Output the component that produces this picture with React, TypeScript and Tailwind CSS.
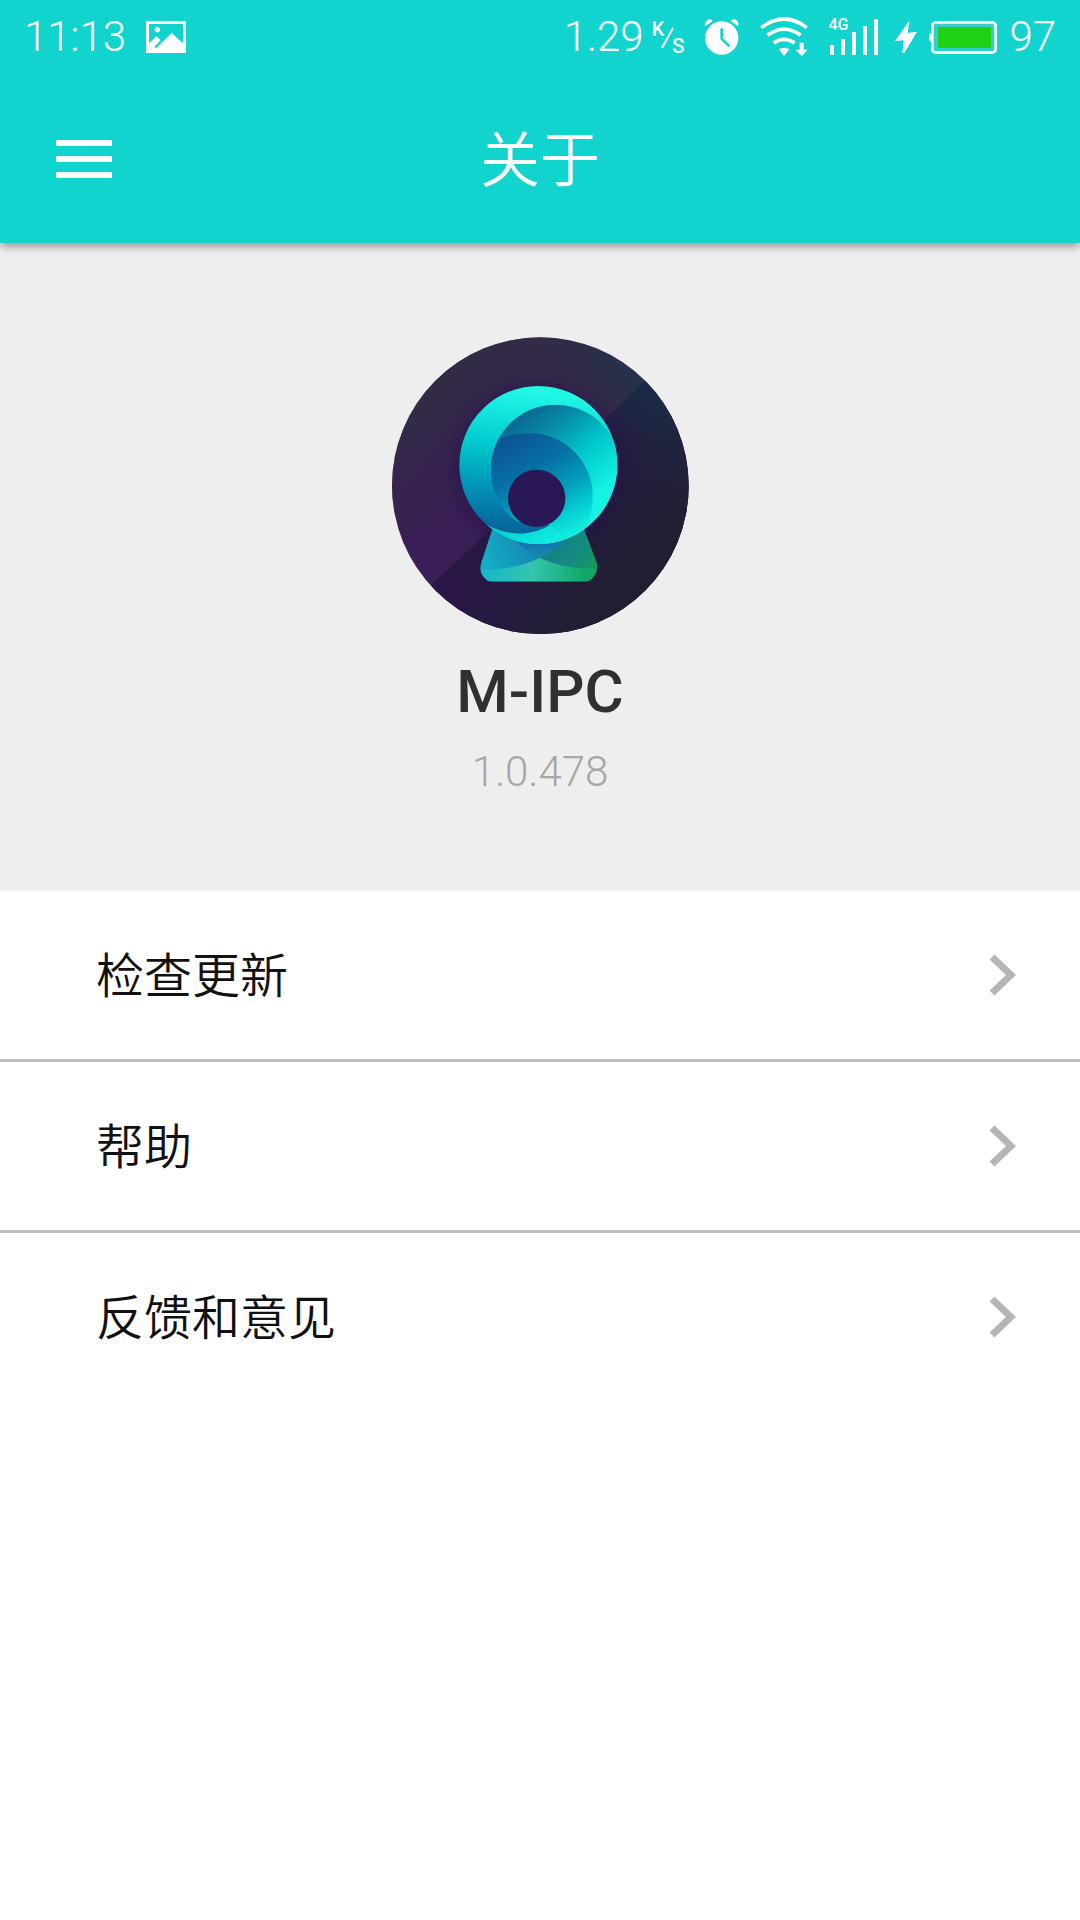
import React from "react";

const menuItems = ["检查更新", "帮助", "反馈和意见"];

function PictureIcon() {
  return (
    <svg className="h-8 w-10 shrink-0" viewBox="0 0 120 96" aria-hidden="true">
      <path d="M4.500 4.500H115.500V91.500H4.500Z" fill="none" stroke="#fff" strokeWidth="9" />
      <circle cx="34" cy="26" r="8" fill="#fff" />
      <path d="M6 69 31 46 44 57 25 78 30 82 77 36 114 70V92H6Z" fill="#fff" />
    </svg>
  );
}

function AlarmIcon() {
  return (
    <svg className="h-9 w-9 shrink-0" viewBox="0 0 108 108" aria-hidden="true">
      <circle cx="53" cy="57" r="50" fill="#fff" />
      <path d="M4 22Q0 12 8 4Q18-3 26 6ZM102 22Q106 12 98 4Q88-3 80 6Z" fill="#fff" />
      <path d="M53 31V59L74 80" fill="none" stroke="#12d4ce" strokeWidth="8" strokeLinecap="round" strokeLinejoin="round" />
    </svg>
  );
}

function WifiIcon() {
  return (
    <svg className="h-10 w-12 shrink-0" viewBox="0 0 144 120" aria-hidden="true">
      <g fill="none" stroke="#fff" strokeWidth="11">
        <path d="M4 32Q72-20 140 32" />
        <path d="M22 55Q72 18 122 55" />
        <path d="M41 78Q72 56 104 78" />
      </g>
      <path d="M56 97Q72 88 88 97L72 117Z" fill="#fff" />
      <path d="M119 77H131V98H143L125 118 107 98H119Z" fill="#fff" />
    </svg>
  );
}

function SignalIcon() {
  return (
    <div className="relative h-9 w-[51px] shrink-0">
      <span className="absolute left-0 top-0 text-base leading-3 font-medium">4G</span>
      <svg className="h-9 w-[51px]" viewBox="0 0 153 108" aria-hidden="true">
        <path d="M6 78h12v30H6zM39 60h12v48H39zM72 39h12v69H72zM105 21h12v87h-12zM138 0h12v108h-12z" fill="#fff" />
      </svg>
    </div>
  );
}

function BoltIcon() {
  return (
    <svg className="h-8 w-[22px] shrink-0" viewBox="0 0 66 96" aria-hidden="true">
      <path d="M42 0 0 60 26 58 22 96H28L66 32 38 36 43 0Z" fill="#fff" />
    </svg>
  );
}

function BatteryIcon() {
  return (
    <svg className="h-[33px] w-[68px] shrink-0" viewBox="0 0 204 99" aria-hidden="true">
      <rect x="10" y="4" width="190" height="91" rx="11" fill="#35cfcb" stroke="#fff" strokeWidth="8" />
      <path d="M7 37Q0 38 0 45V55Q0 62 7 63Z" fill="#fff" />
      <rect x="27" y="18" width="159" height="63" fill="#20d014" />
    </svg>
  );
}

function StatusBar() {
  return (
    <div className="flex h-[74px] items-center justify-between px-6 text-[42px] leading-[74px] font-[350]">
      <div className="flex items-center gap-5">
        <span>11:13</span>
        <PictureIcon />
      </div>
      <div className="flex items-center">
        <span>1.29</span>
        <div className="ml-2 mr-5 flex h-[33px] items-stretch text-xl leading-4 font-medium">
          <span>K</span>
          <svg className="-mx-1 h-[33px] w-4" viewBox="0 0 16 33" aria-hidden="true">
            <path d="M2 27 13 7" stroke="#fff" strokeWidth="2" />
          </svg>
          <span className="self-end">S</span>
        </div>
        <AlarmIcon />
        <div className="ml-5 flex items-center">
          <WifiIcon />
        </div>
        <div className="ml-5 flex items-center gap-4">
          <SignalIcon />
          <BoltIcon />
        </div>
        <div className="ml-3 flex items-center gap-3">
          <BatteryIcon />
          <span>97</span>
        </div>
      </div>
    </div>
  );
}

function Logo() {
  return (
    <svg className="h-[297px] w-[297px]" viewBox="36 36 891 891" role="img" aria-label="M-IPC">
      <defs>
        <linearGradient id="upper" gradientUnits="userSpaceOnUse" x1="200" y1="680" x2="760" y2="120">
          <stop offset="0" stopColor="#3a1e55" />
          <stop offset="0.45" stopColor="#33224f" />
          <stop offset="0.8" stopColor="#332a48" />
          <stop offset="1" stopColor="#24324a" />
        </linearGradient>
        <linearGradient id="edge" gradientUnits="userSpaceOnUse" x1="120" y1="120" x2="400" y2="400">
          <stop offset="0.1" stopColor="#322d43" />
          <stop offset="1" stopColor="#35284a" stopOpacity="0" />
        </linearGradient>
        <linearGradient id="lower" gradientUnits="userSpaceOnUse" x1="200" y1="760" x2="840" y2="200">
          <stop offset="0" stopColor="#291646" />
          <stop offset="0.75" stopColor="#241c42" />
          <stop offset="1" stopColor="#1a2d45" />
        </linearGradient>
        <linearGradient id="corner" gradientUnits="userSpaceOnUse" x1="530" y1="530" x2="760" y2="760">
          <stop offset="0" stopColor="#201f31" stopOpacity="0" />
          <stop offset="1" stopColor="#201f31" />
        </linearGradient>
        <linearGradient id="outer" gradientUnits="userSpaceOnUse" x1="440" y1="200" x2="400" y2="625">
          <stop offset="0" stopColor="#20f8e6" />
          <stop offset="0.38" stopColor="#02cbd0" />
          <stop offset="0.62" stopColor="#00a1bd" />
          <stop offset="0.85" stopColor="#0678a8" />
          <stop offset="1" stopColor="#09639a" />
        </linearGradient>
        <linearGradient id="middle" gradientUnits="userSpaceOnUse" x1="420" y1="245" x2="640" y2="520">
          <stop offset="0" stopColor="#0b5f8f" />
          <stop offset="0.3" stopColor="#0789a4" />
          <stop offset="0.62" stopColor="#00c6cb" />
          <stop offset="1" stopColor="#16f3e3" />
        </linearGradient>
        <linearGradient id="inner" gradientUnits="userSpaceOnUse" x1="400" y1="350" x2="560" y2="640">
          <stop offset="0" stopColor="#0b5895" />
          <stop offset="0.3" stopColor="#0670a4" />
          <stop offset="0.6" stopColor="#02a2bd" />
          <stop offset="0.8" stopColor="#04cdd2" />
          <stop offset="1" stopColor="#14efe1" />
        </linearGradient>
        <linearGradient id="base" x1="0" y1="0" x2="1" y2="0">
          <stop offset="0" stopColor="#10b5cd" />
          <stop offset="0.45" stopColor="#35c4ae" />
          <stop offset="0.85" stopColor="#10a968" />
          <stop offset="1" stopColor="#10a65f" />
        </linearGradient>
        <linearGradient id="baseLeft" gradientUnits="userSpaceOnUse" x1="310" y1="720" x2="480" y2="650">
          <stop offset="0" stopColor="#14afc7" />
          <stop offset="1" stopColor="#1481b2" />
        </linearGradient>
        <linearGradient id="baseRight" gradientUnits="userSpaceOnUse" x1="530" y1="650" x2="640" y2="720">
          <stop offset="0" stopColor="#137f82" />
          <stop offset="0.5" stopColor="#158b83" />
          <stop offset="1" stopColor="#13975f" />
        </linearGradient>
        <linearGradient id="baseTop" gradientUnits="userSpaceOnUse" x1="480" y1="650" x2="480" y2="698">
          <stop offset="0" stopColor="#1070b2" />
          <stop offset="1" stopColor="#178daa" />
        </linearGradient>
        <radialGradient id="glow">
          <stop offset="0.78" stopColor="#24104a" stopOpacity="0.5" />
          <stop offset="1" stopColor="#24104a" stopOpacity="0" />
        </radialGradient>
        <clipPath id="disc"><circle cx="481" cy="482" r="445" /></clipPath>
        <clipPath id="ring"><circle cx="475" cy="420" r="237" /></clipPath>
        <clipPath id="bowl"><path d="M333 433A194 194 0 0 1 527 239C610 240 680 285 716 380V670H330L320 600Q375 628 430 626Q475 622 512 600L410 588Q333 530 333 433Z" /></clipPath>
        <clipPath id="stand"><path d="M340 605H608L648 708Q657 739 638 758Q627 770 616 770H334Q322 770 313 758Q296 742 304 714Z" /></clipPath>
      </defs>
      <g clipPath="url(#disc)">
        <rect x="35" y="36" width="892" height="892" fill="url(#upper)" />
        <rect x="35" y="36" width="892" height="892" fill="url(#edge)" />
        <path d="M153 780 320 626 792 170 940 40V940H100Z" fill="url(#lower)" />
        <path d="M153 780 320 626 792 170 940 40V940H100Z" fill="url(#corner)" />
      </g>
      <circle cx="475" cy="430" r="290" fill="url(#glow)" />
      <g clipPath="url(#stand)">
        <path d="M280 590H670V790H280Z" fill="url(#base)" />
        <path d="M280 590H600Q560 660 480 698Q400 738 280 735Z" fill="url(#baseLeft)" />
        <path d="M480 698Q560 660 600 590H670V728Q560 738 480 698Z" fill="url(#baseRight)" />
        <path d="M400 640Q430 672 480 698Q525 678 556 640Z" fill="url(#baseTop)" />
      </g>
      <circle cx="475" cy="420" r="237" fill="url(#outer)" />
      <g clipPath="url(#ring)">
        <g clipPath="url(#bowl)">
          <path d="M230 180H720V670H230Z" fill="url(#middle)" />
          <path d="M300 345H352Q400 325 450 325A188 188 0 0 1 638 513Q638 575 610 620L560 670H300Z" fill="url(#inner)" />
          <path d="M320 595Q375 628 430 626Q475 622 512 600Q550 625 560 670H300Z" fill="#14efe0" opacity="0.5" />
        </g>
      </g>
      <circle cx="470" cy="520" r="86" fill="#2a1756" />
    </svg>
  );
}

export default function App() {
  return (
    <div className="min-h-screen bg-white font-['Roboto','Noto_Sans_CJK_SC',sans-serif]">
      <header className="relative bg-[#12d4ce] text-white shadow-[0_3px_9px_rgba(0,0,0,0.4)]">
        <StatusBar />
        <div className="grid h-[169px] grid-cols-[56px_1fr_56px] items-center px-14">
          <button type="button" aria-label="菜单" className="flex h-14 flex-col justify-center gap-2.5">
            <span className="h-1.5 w-14 bg-white" />
            <span className="h-1.5 w-14 bg-white" />
            <span className="h-1.5 w-14 bg-white" />
          </button>
          <h1 className="pt-1.5 text-center text-[60px] leading-[72px] font-[350]">关于</h1>
        </div>
      </header>
      <main>
        <section className="flex flex-col items-center bg-[#eeeeee] pt-[94px] pb-[87px]">
          <Logo />
          <h2 className="mt-[22px] text-[60px] leading-[72px] font-medium text-[#303030]">M-IPC</h2>
          <p className="mt-3 text-[42px] leading-[64px] font-[350] text-[#a6a6a6]">1.0.478</p>
        </section>
        <ul className="divide-y-3 divide-[#bebebe]">
          {menuItems.map((label) => (
            <li key={label}>
              <button type="button" className="flex h-[168px] w-full items-center justify-between pl-24 pr-16 text-5xl font-[350] text-[#111111]">
                <span className="pt-1">{label}</span>
                <svg className="h-[42px] w-[27px]" viewBox="0 0 27 42" aria-hidden="true">
                  <path d="M3 3 22 21 3 39" fill="none" stroke="#b5b5b5" strokeWidth="7" />
                </svg>
              </button>
            </li>
          ))}
        </ul>
      </main>
    </div>
  );
}
